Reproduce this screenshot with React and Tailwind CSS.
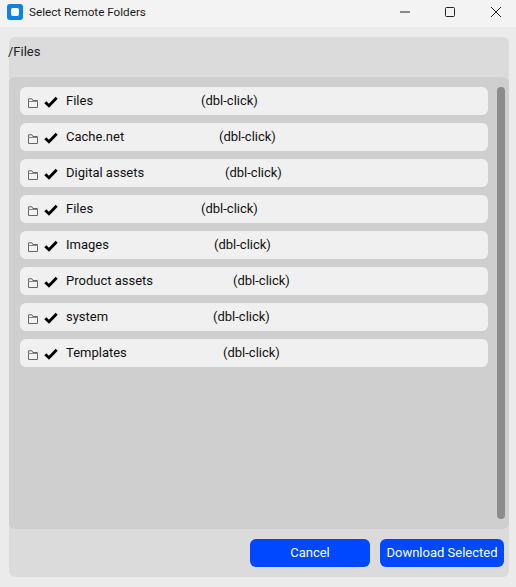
const folders = [
  { name: "Files", hint: "w-[135px]" },
  { name: "Cache.net", hint: "w-[153px]" },
  { name: "Digital assets", hint: "w-[159px]" },
  { name: "Files", hint: "w-[135px]" },
  { name: "Images", hint: "w-[148px]" },
  { name: "Product assets", hint: "w-[167px]" },
  { name: "system", hint: "w-[147px]" },
  { name: "Templates", hint: "w-[157px]" },
];

function FolderIcon() {
  return (
    <svg width="11" height="11" viewBox="0 0 11 11" fill="none" className="mt-[4px] shrink-0">
      <path d="M0.5 9.5V0.8H4L4.8 2.5H9.5V9.5H0.5Z" fill="#f6f3ee" stroke="#6a6468" strokeWidth="1" />
      <path d="M0.5 3.5H9.5" stroke="#8a8288" strokeWidth="1" />
    </svg>
  );
}

function CheckIcon() {
  return (
    <svg width="14" height="12" viewBox="0 0 14 12" fill="none" className="ml-[5px] mt-[1px] shrink-0">
      <path d="M1.3 6.2L5 9.7L12.7 1.8" stroke="#000000" strokeWidth="2.9" />
    </svg>
  );
}

function FolderRow({ name, hint }) {
  return (
    <div className="flex h-7 items-center rounded-md bg-[#f0f0f0] pl-[8px] text-[13px] text-[#111111]">
      <FolderIcon />
      <CheckIcon />
      <span className={`ml-[8px] ${hint}`}>{name}</span>
      <span>(dbl-click)</span>
    </div>
  );
}

export default function App() {
  return (
    <div className="flex h-[587px] w-[516px] flex-col overflow-hidden bg-[#ebebeb] font-['Roboto',sans-serif]">
      <div className="flex h-[27px] items-center bg-[#f3f3f3] pb-[3px] pl-[7px] text-[11.7px] text-[#1a1a1a]">
        <div className="flex h-4 w-4 items-center justify-center rounded-[3px] bg-[#0a84e0]">
          <div className="h-2 w-2 rounded-[2px] bg-white" />
        </div>
        <span className="ml-[6px] mt-[2px]">Select Remote Folders</span>
        <div className="ml-auto flex items-center">
          <svg width="12" height="12" viewBox="0 0 12 12" className="mr-[33px]">
            <path d="M1 6H11" stroke="#222222" strokeWidth="1" />
          </svg>
          <svg width="12" height="12" viewBox="0 0 12 12" className="mr-[34px]">
            <rect x="1.5" y="1.5" width="9" height="9" rx="1" fill="none" stroke="#222222" strokeWidth="1" />
          </svg>
          <svg width="12" height="12" viewBox="0 0 12 12" className="mr-[14px]">
            <path d="M1 1L11 11M11 1L1 11" stroke="#222222" strokeWidth="1" />
          </svg>
        </div>
      </div>

      <div className="mx-[9px] mb-[10px] mt-[10px] flex flex-1 flex-col rounded-md bg-[#dbdbdb] [width:500px]">
        <div className="flex h-10 items-center pb-[12px] pt-[1px] text-[13px] text-[#222222]">
          <span className="-ml-px">/Files</span>
        </div>
        <div className="flex h-[452px] rounded-md bg-[#cfcfcf]">
          <div className="flex flex-1 flex-col gap-2 pl-[11px] pr-[9px] pt-[10px]">
            {folders.map((folder, i) => (
              <FolderRow key={i} name={folder.name} hint={folder.hint} />
            ))}
          </div>
          <div className="mb-[10px] mr-[4px] mt-[10px] w-2 rounded-full bg-[#8c8c8c]" />
        </div>
        <div className="flex justify-end gap-[10px] pr-[5px] pt-[10px] text-[13px] text-white">
          <button type="button" className="h-7 w-[120px] rounded-md bg-[#0048ff]">Cancel</button>
          <button type="button" className="h-7 w-[124px] rounded-md bg-[#0048ff]">Download Selected</button>
        </div>
      </div>
    </div>
  );
}
